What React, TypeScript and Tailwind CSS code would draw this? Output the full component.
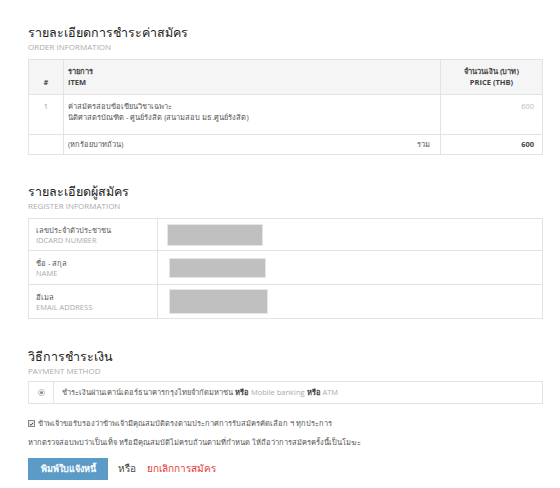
const font = { fontFamily: '"Open Sans", "Noto Sans", "DejaVu Sans", sans-serif' };

function SectionTitle({ th, en }: { th: string; en: string }) {
    return (
        <div>
            <h2 className="text-[12.5px] leading-[16px] text-[#222]">{th}</h2>
            <p className="text-[8px] leading-[12px] text-[#aaa] uppercase">{en}</p>
        </div>
    );
}

function GrayBox({ w, h }: { w: string; h: string }) {
    return <div className={`bg-[#c0c0c0] border border-[#e6e6e6] ${w} ${h}`} />;
}

export default function App() {
    return (
        <div className="w-[560px] h-[488px] bg-white pl-[28px] pr-[17px] pt-[25px] text-[#555]" style={font}>
            {/* order */}
            <SectionTitle th="รายละเอียดการชำระค่าสมัคร" en="Order Information" />
            <table className="mt-[6px] w-full border-collapse border border-[#e3e3e3] text-[7.5px]">
                <thead>
                    <tr className="bg-[#f5f5f5] h-[35px]">
                        <th className="w-[35px] border border-[#e3e3e3] align-bottom pb-[6px] text-center font-bold text-[#444]">#</th>
                        <th className="border border-[#e3e3e3] text-left px-[4px] align-middle font-bold text-[#444] leading-[11px]">
                            <div>รายการ</div>
                            <div>ITEM</div>
                        </th>
                        <th className="w-[102px] border border-[#e3e3e3] text-center px-[8px] font-bold text-[#444] leading-[11px]">
                            <div>จำนวนเงิน (บาท)</div>
                            <div>PRICE (THB)</div>
                        </th>
                    </tr>
                </thead>
                <tbody>
                    <tr className="h-[40px]">
                        <td className="border border-[#e3e3e3] text-center align-top pt-[6px] text-[#999]">1</td>
                        <td className="border border-[#e3e3e3] align-top px-[4px] pt-[6px] leading-[11px] text-[#555]">
                            <div>ค่าสมัครสอบข้อเขียนวิชาเฉพาะ</div>
                            <div>นิติศาสตรบัณฑิต - ศูนย์รังสิต (สนามสอบ มธ.ศูนย์รังสิต)</div>
                        </td>
                        <td className="border border-[#e3e3e3] align-top text-right px-[8px] pt-[6px] text-[#bbb]">600</td>
                    </tr>
                    <tr className="h-[20px]">
                        <td className="border border-[#e3e3e3]" />
                        <td className="border border-[#e3e3e3] pl-[4px] pr-[10px]">
                            <div className="flex justify-between">
                                <span>(หกร้อยบาทถ้วน)</span>
                                <span>รวม</span>
                            </div>
                        </td>
                        <td className="border border-[#e3e3e3] text-right px-[8px] font-bold text-[#444]">600</td>
                    </tr>
                </tbody>
            </table>

            {/* register */}
            <div className="mt-[29px]">
                <SectionTitle th="รายละเอียดผู้สมัคร" en="Register Information" />
            </div>
            <table className="mt-[6px] w-full border-collapse border border-[#e3e3e3] text-[7.5px]">
                <tbody>
                    {[
                        { th: 'เลขประจำตัวประชาชน', en: 'IDCARD NUMBER', w: 'w-[96px]', h: 'h-[22px]', pad: 'pl-[9px]' },
                        { th: 'ชื่อ - สกุล', en: 'NAME', w: 'w-[97px]', h: 'h-[20px]', pad: 'pl-[11px]' },
                        { th: 'อีเมล', en: 'EMAIL ADDRESS', w: 'w-[99px]', h: 'h-[25px]', pad: 'pl-[11px]' },
                    ].map((r, i) => (
                        <tr key={i} className={i === 0 ? 'h-[32px]' : 'h-[34px]'}>
                            <td className="w-[129px] border border-[#e3e3e3] px-[7px] align-middle leading-[10px]">
                                <div className="text-[#555]">{r.th}</div>
                                <div className="text-[#aaa]">{r.en}</div>
                            </td>
                            <td className={`border border-[#e3e3e3] ${r.pad} align-middle`}>
                                <GrayBox w={r.w} h={r.h} />
                            </td>
                        </tr>
                    ))}
                </tbody>
            </table>

            {/* payment */}
            <div className="mt-[30px]">
                <SectionTitle th="วิธีการชำระเงิน" en="Payment Method" />
            </div>
            <div className="mt-[4px] flex border border-[#e3e3e3] h-[23px] text-[7.5px]">
                <div className="w-[25px] border-r border-[#e3e3e3] flex items-center justify-center">
                    <span className="w-[7px] h-[7px] rounded-full border border-[#bbb] bg-white flex items-center justify-center">
                        <span className="w-[3px] h-[3px] rounded-full bg-[#888]" />
                    </span>
                </div>
                <div className="flex items-center px-[8px] text-[#555]">
                    <span>
                        ชำระเงินผ่านเคาน์เตอร์ธนาคารกรุงไทยจำกัดมหาชน <b className="text-[#444]">หรือ</b>{' '}
                        <span className="text-[#aaa]">Mobile banking</span> <b className="text-[#444]">หรือ</b>{' '}
                        <span className="text-[#aaa]">ATM</span>
                    </span>
                </div>
            </div>

            {/* terms */}
            <div className="mt-[14px] flex items-center gap-[3px] text-[7.5px] text-[#555]">
                <span className="w-[7px] h-[7px] border border-[#888] bg-[#f0f0f0] flex items-center justify-center">
                    <svg viewBox="0 0 10 10" className="w-[6px] h-[6px]">
                        <path d="M1.5 5.2 L4 7.6 L8.6 2.2" fill="none" stroke="#333" strokeWidth="1.8" />
                    </svg>
                </span>
                <span>ข้าพเจ้าขอรับรองว่าข้าพเจ้ามีคุณสมบัติตรงตามประกาศการรับสมัครคัดเลือก ฯ ทุกประการ</span>
            </div>
            <p className="mt-[8px] text-[7.5px] text-[#555]">
                หากตรวจสอบพบว่าเป็นเท็จ หรือมีคุณสมบัติไม่ครบถ้วนตามที่กำหนด ให้ถือว่าการสมัครครั้งนี้เป็นโมฆะ
            </p>

            <div className="mt-[9px] flex items-center">
                <button type="button" className="w-[80px] h-[22px] bg-[#5b9bc8] text-white text-[9px] font-bold">
                    พิมพ์ใบแจ้งหนี้
                </button>
                <span className="ml-[10px] text-[10px] text-[#444]">หรือ</span>
                <a className="ml-[11px] text-[10px] text-[#e53935] cursor-pointer">ยกเลิกการสมัคร</a>
            </div>
        </div>
    );
}
